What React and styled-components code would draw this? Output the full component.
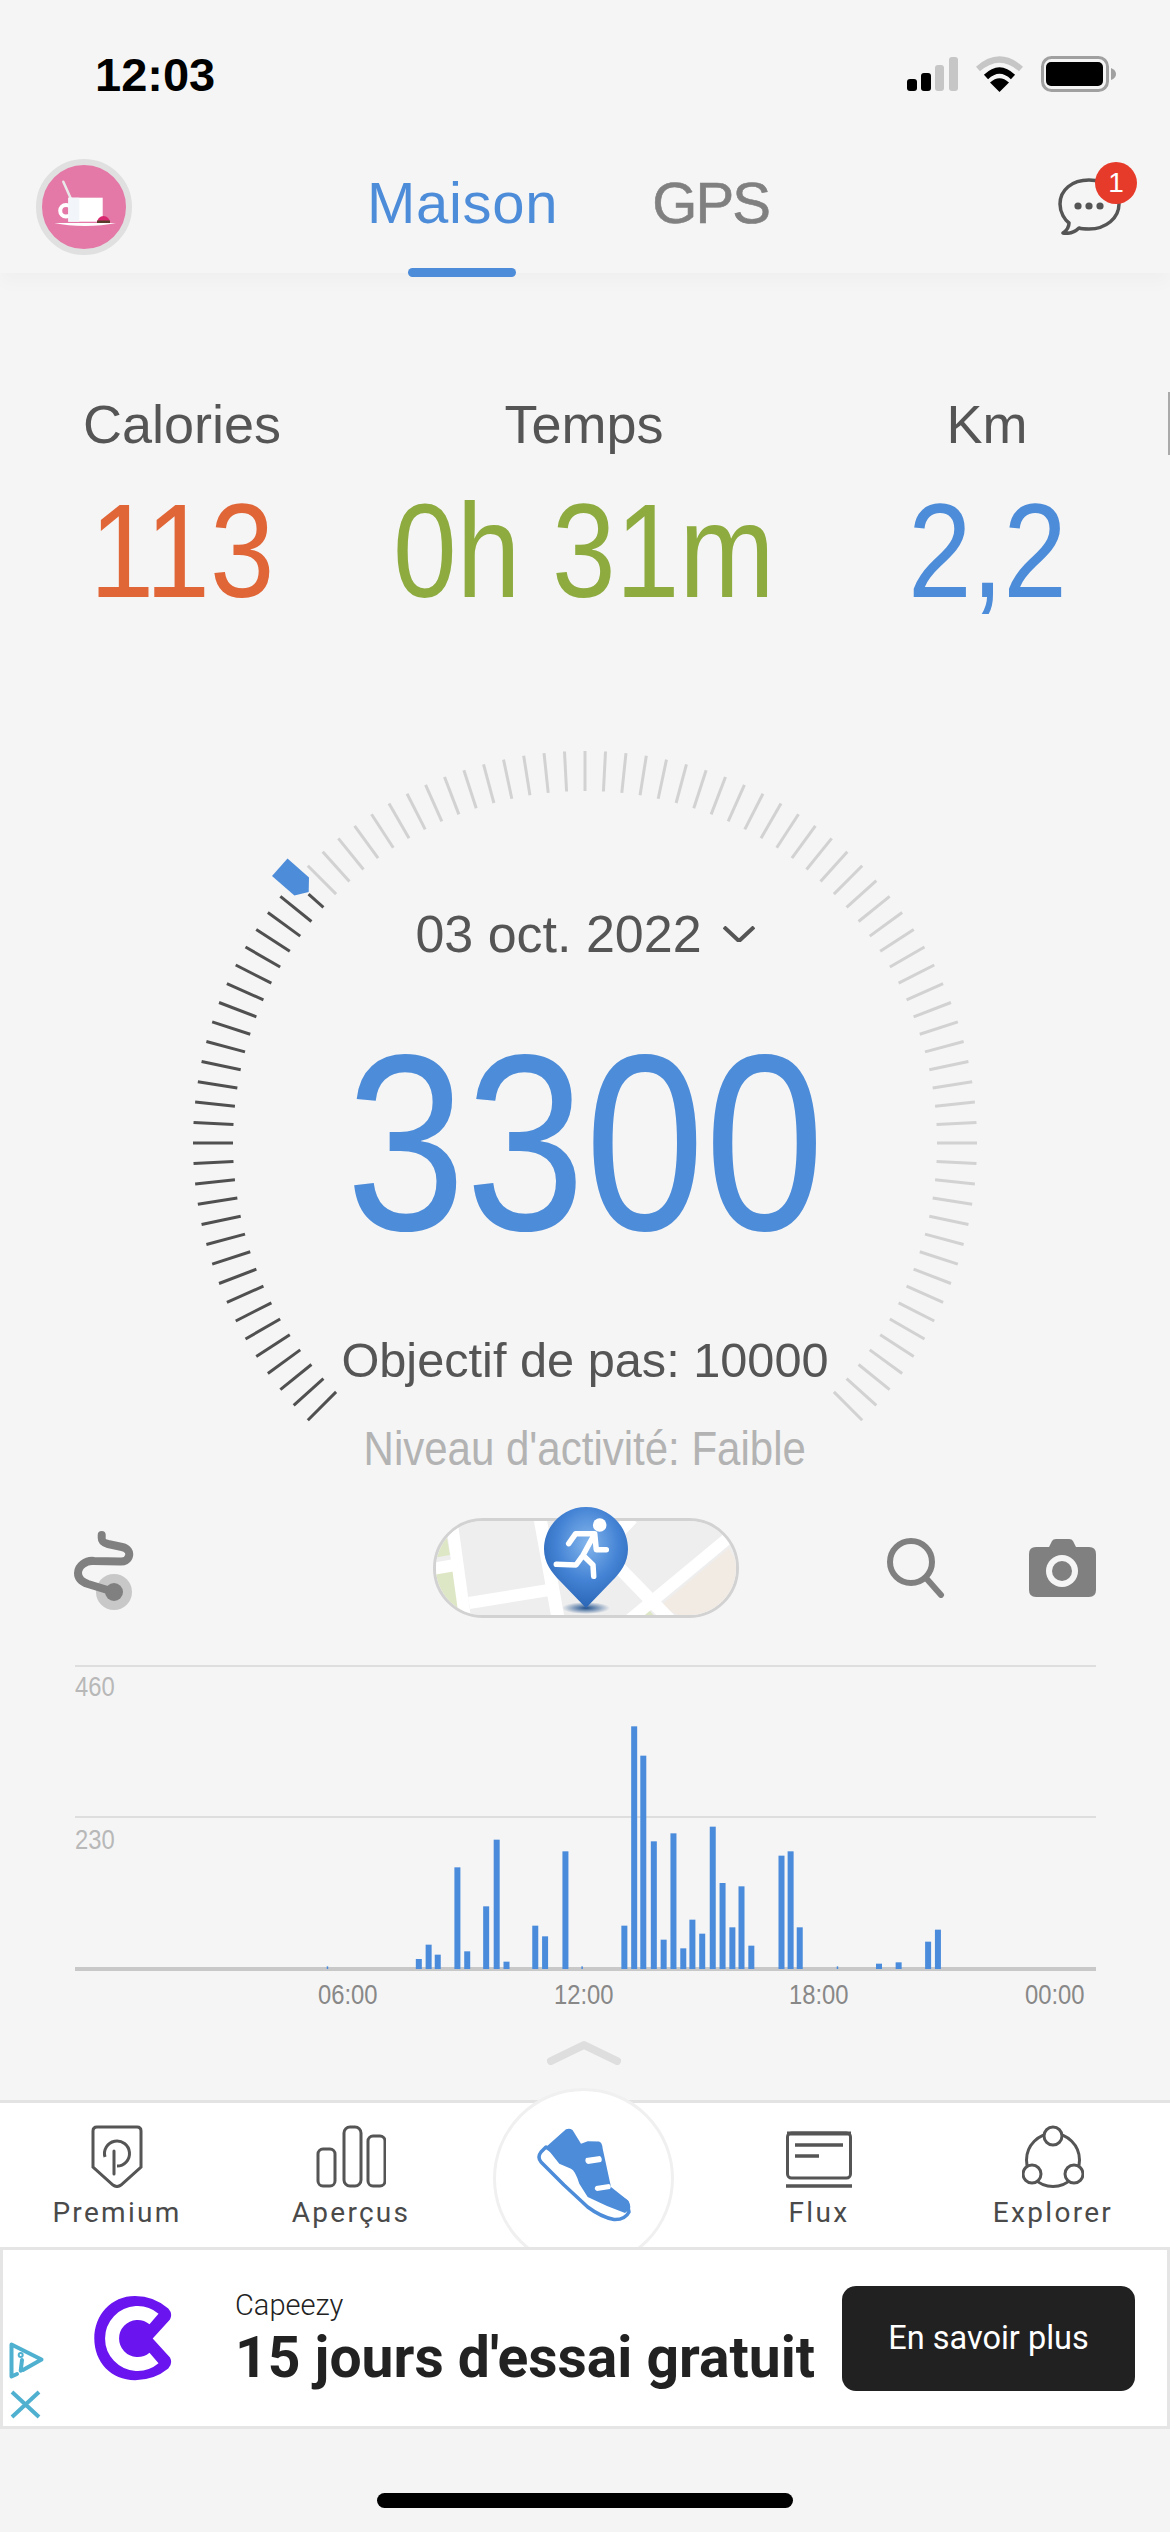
import React from 'react';
import styled, { createGlobalStyle } from 'styled-components';

const GlobalStyle = createGlobalStyle`
  html, body { margin: 0; padding: 0; background: #f5f5f5; }
  body { font-family: "Liberation Sans", Arial, sans-serif; }
`;

const BLUE = '#4d8cd9';

const Page = styled.div`
  width: 1170px;
  height: 2532px;
  background: #f5f5f5;
  display: flex;
  flex-direction: column;
  overflow: hidden;
`;

const StatusBar = styled.div`
  height: 148px;
  margin-bottom: 2px;
  display: flex;
  align-items: center;
  justify-content: space-between;
  padding: 0 54px 0 95px;
  box-sizing: border-box;
`;

const Time = styled.div`
  font-size: 47px;
  font-weight: 700;
  color: #000;
`;

const StatusIcons = styled.div`
  display: flex;
  align-items: center;
  gap: 17px;
`;

const Header = styled.header`
  height: 123px;
  display: flex;
  align-items: flex-start;
  padding: 0 49px 0 36px;
  box-sizing: border-box;
  background: #f5f5f5;
  box-shadow: 0 10px 16px rgba(0, 0, 0, 0.025);
`;

const Avatar = styled.div`
  width: 96px;
  height: 96px;
  margin-top: 9px;
  box-sizing: border-box;
  border: 6px solid #e0e0e0;
  border-radius: 50%;
  background: #e479a8;
  overflow: hidden;
`;

const Tabs = styled.nav`
  display: flex;
  gap: 94px;
  margin-left: 235px;
`;

const Tab = styled.div`
  position: relative;
  height: 123px;
  padding-top: 24px;
  box-sizing: border-box;
  font-size: 58px;
  line-height: 1;
  letter-spacing: ${p => (p.$active ? '0.7px' : '-1.8px')};
  color: ${p => (p.$active ? BLUE : '#808080')};
  -webkit-text-stroke: ${p => (p.$active ? '0' : '0.6px #808080')};
  &::after {
    content: '';
    display: ${p => (p.$active ? 'block' : 'none')};
    position: absolute;
    left: 41px;
    bottom: -4px;
    width: 108px;
    height: 9px;
    border-radius: 5px;
    background: ${BLUE};
  }
`;

const Messages = styled.div`
  position: relative;
  margin-left: auto;
  margin-top: 28px;
  width: 63px;
  height: 57px;
`;

const Badge = styled.span`
  position: absolute;
  left: 37px;
  top: -16px;
  width: 42px;
  height: 42px;
  border-radius: 50%;
  background: #e63a2b;
  color: #fff;
  font-size: 28px;
  line-height: 42px;
  text-align: center;
`;

const Stats = styled.section`
  position: relative;
  margin-top: 124px;
  display: grid;
  grid-template-columns: 364px 432px 1fr;
  column-gap: 4px;
`;

const EdgeMark = styled.i`
  position: absolute;
  right: 0;
  top: -5px;
  width: 2px;
  height: 63px;
  background: #aaa;
`;

const Stat = styled.div`
  display: flex;
  flex-direction: column;
  align-items: center;
  gap: 34px;
`;

const StatLabel = styled.div`
  font-size: 54px;
  line-height: 1;
  color: #555;
`;

const Narrow = styled.div`
  font-size: ${p => p.$size}px;
  line-height: 1;
  color: ${p => p.$color};
  white-space: nowrap;
  transform: scaleX(${p => p.$sx});
`;

const Dial = styled.section`
  position: relative;
  margin-top: 131px;
  height: 724px;
  padding-top: 159px;
  box-sizing: border-box;
  display: flex;
  flex-direction: column;
  align-items: center;
`;

const Ticks = styled.svg`
  position: absolute;
  left: 191px;
  top: 0;
`;

const DateRow = styled.div`
  position: relative;
  display: flex;
  align-items: center;
  gap: 21px;
  font-size: 52px;
  line-height: 1;
  color: #555;
`;

const Steps = styled(Narrow)`
  position: relative;
  margin-top: 59px;
`;

const Goal = styled.div`
  position: relative;
  margin-top: 67px;
  font-size: 48.7px;
  line-height: 1;
  color: #555;
`;

const Level = styled(Narrow)`
  position: relative;
  margin-top: 40px;
`;

const ToolRow = styled.section`
  position: relative;
  margin-top: 45px;
  height: 100px;
  padding: 0 74px 0 70px;
  display: grid;
  grid-template-columns: 363px 306px 1fr;
  align-items: center;
`;

const Tools = styled.div`
  display: flex;
  justify-content: flex-end;
  align-items: center;
  gap: 83px;
`;

const RouteSvg = styled.svg`
  margin-top: 6px;
`;

const MapPill = styled.div`
  position: relative;
  width: 306px;
  height: 100px;
`;

const MapFrame = styled.div`
  width: 100%;
  height: 100%;
  box-sizing: border-box;
  border: 3px solid #d2d2d2;
  border-radius: 50px;
  overflow: hidden;
  background: #eee;
  svg { display: block; }
`;

const Pin = styled.svg`
  position: absolute;
  left: 111px;
  top: -11px;
`;

const Chart = styled.section`
  position: relative;
  margin: 47px 74px 0 75px;
  height: 306px;
  svg { display: block; }
`;

const YLabel = styled.span`
  position: absolute;
  left: 0;
  top: ${p => p.$top}px;
  font-size: 28px;
  line-height: 1;
  color: #b8b8b8;
  transform: scaleX(0.85);
  transform-origin: left center;
`;

const XAxis = styled.div`
  margin-top: 10px;
  padding-right: 86px;
  display: flex;
  justify-content: flex-end;
`;

const XLabel = styled.span`
  width: 235.5px;
  font-size: 28px;
  line-height: 1;
  color: #888;
  text-align: right;
  transform: scaleX(0.85);
  transform-origin: right center;
`;

const Handle = styled.div`
  margin-top: 31px;
  height: 25px;
  display: flex;
  justify-content: center;
  padding-right: 2px;
`;

const BottomNav = styled.nav`
  margin-top: 35px;
  height: 147px;
  box-sizing: border-box;
  border-top: 3px solid #e3e3e3;
  background: #fff;
  padding-top: 22px;
  display: grid;
  grid-template-columns: repeat(5, 234px);
`;

const NavItem = styled.div`
  position: relative;
  display: flex;
  flex-direction: column;
  align-items: center;
`;

const NavIcon = styled.div`
  height: 63px;
  display: flex;
  align-items: flex-end;
`;

const NavLabel = styled.div`
  margin-top: 11px;
  font-family: Roboto, "Liberation Sans", sans-serif;
  font-size: 28px;
  font-weight: 400;
  line-height: 1;
  letter-spacing: 2.3px;
  color: #4a4a4a;
`;

const RunButton = styled.div`
  position: absolute;
  left: 25px;
  top: -37px;
  width: 181px;
  height: 181px;
  box-sizing: border-box;
  border: 3px solid #f0f0f0;
  border-radius: 50%;
  background: #fff;
  display: flex;
  align-items: flex-start;
  justify-content: center;
  padding-top: 37px;
`;

const Ad = styled.aside`
  position: relative;
  z-index: 2;
  height: 182px;
  box-sizing: border-box;
  border: 3px solid #e5e5e5;
  background: #fff;
  display: flex;
  align-items: center;
  padding: 0 32px 0 91px;
`;

const AdChoices = styled.svg`
  position: absolute;
  left: 6px;
  top: 92px;
`;

const AdText = styled.div`
  margin-left: 63px;
  font-family: Roboto, "Liberation Sans", sans-serif;
  color: #222;
`;

const AdBrand = styled.div`
  font-size: 29px;
  font-weight: 300;
  line-height: 1;
`;

const AdTitle = styled.div`
  margin-top: 9px;
  font-size: 57px;
  font-weight: 700;
  line-height: 1;
  white-space: nowrap;
`;

const AdButton = styled.div`
  margin-left: auto;
  width: 293px;
  height: 105px;
  border-radius: 14px;
  background: #212121;
  color: #fff;
  font-family: Roboto, "Liberation Sans", sans-serif;
  font-size: 32.5px;
  display: flex;
  align-items: center;
  justify-content: center;
`;

const HomeBar = styled.div`
  align-self: center;
  margin-top: 64px;
  width: 416px;
  height: 15px;
  border-radius: 8px;
  background: #000;
`;

const Bottom = styled.div`
  flex: 1;
  background: #f4f4f4;
  display: flex;
  flex-direction: column;
`;

// bar positions read off the reference: [left x, height]
const bars = [
  [413, 8], [540, 30], [554, 73], [567, 43], [595, 305], [609, 53], [636, 188], [651, 388], [665, 22],
  [706, 130], [720, 98], [749, 353], [776, 8], [833, 130], [847, 728], [860, 640], [875, 383], [889, 88],
  [903, 407], [917, 62], [930, 148], [944, 106], [959, 427], [973, 258], [987, 125], [1000, 248], [1014, 70],
  [1057, 340], [1070, 353], [1083, 125], [1140, 8], [1196, 16], [1224, 20], [1266, 82], [1280, 118],
].map(([zx, zh]) => ({ x: 40 + zx / 1.4255 - 75, h: zh / 3, tiny: zh < 10 }));

function DialTicks() {
  const ticks = [];
  for (let a = -135; a <= 135; a += 3) {
    const rad = (a * Math.PI) / 180;
    const outer = a === -48 ? 372 : 392;
    ticks.push(
      <line
        key={a}
        x1={394 + 352 * Math.sin(rad)}
        y1={394 - 352 * Math.cos(rad)}
        x2={394 + outer * Math.sin(rad)}
        y2={394 - outer * Math.cos(rad)}
        stroke={a <= -48 ? '#505050' : '#d2d2d2'}
        strokeWidth="3"
      />
    );
  }
  return (
    <Ticks width="788" height="788" viewBox="0 0 788 788">
      {ticks}
      <polygon points="96.5,109.6 118,128.5 117.7,143 103.4,146.5 81,127" fill={BLUE} />
    </Ticks>
  );
}

function CupAvatar() {
  return (
    <svg width="84" height="84" viewBox="0 0 84 84">
      <line x1="21.3" y1="16.7" x2="28.7" y2="33.3" stroke="#e8e8e8" strokeWidth="2.5" strokeLinecap="round" />
      <circle cx="24" cy="45.7" r="5.8" fill="none" stroke="#fff" strokeWidth="4" />
      <rect x="26.3" y="32.7" width="34.4" height="24" fill="#fff" />
      <rect x="26.3" y="32.7" width="11" height="24" fill="#f2f5f9" />
      <path d="M55 58a6.5 7 0 0 1 13 0z" fill="#d8286f" />
      <rect x="55" y="55.5" width="13" height="2.5" fill="#5a3a2a" />
      <path d="M12.3 58H74Q60 61 43 61T12.3 58Z" fill="#fff" />
    </svg>
  );
}

function Signal() {
  return (
    <svg width="51" height="34" viewBox="0 0 51 34">
      <rect x="0" y="22" width="10" height="12" rx="3" fill="#000" />
      <rect x="14" y="16" width="10" height="18" rx="3" fill="#000" />
      <rect x="28" y="8" width="9" height="26" rx="3" fill="#c6c6c6" />
      <rect x="42" y="0" width="9" height="34" rx="3" fill="#c6c6c6" />
    </svg>
  );
}

function Wifi() {
  return (
    <svg width="49" height="36" viewBox="0 0 49 36">
      <path d="M3 13Q24.5 -6 46 13" fill="none" stroke="#c6c6c6" strokeWidth="6" />
      <path d="M11 21Q24.5 8 38 21" fill="none" stroke="#000" strokeWidth="6" />
      <path d="M24.5 36L15 26.5Q24.5 18 34 26.5Z" fill="#000" />
    </svg>
  );
}

function Battery() {
  return (
    <svg width="75" height="36" viewBox="0 0 75 36">
      <rect x="1.5" y="1.5" width="65" height="33" rx="9" fill="none" stroke="#a0a0a0" strokeWidth="3" />
      <rect x="5" y="6" width="57" height="24" rx="5" fill="#000" />
      <path d="M70 12Q75 14 75 18T70 24Z" fill="#a0a0a0" />
    </svg>
  );
}

function Bubble() {
  return (
    <svg width="63" height="57" viewBox="0 0 63 57">
      <path
        d="M31 2C14 2 2 12 2 26C2 35 7 42 11 45C11 49 8 53 5 55C11 56 17 54 21 50C24 51 28 51 31 51C48 51 61 40 61 26C61 12 48 2 31 2Z"
        fill="none"
        stroke="#555"
        strokeWidth="3.5"
        strokeLinejoin="round"
      />
      <circle cx="20" cy="28" r="3.6" fill="#555" />
      <circle cx="31" cy="28" r="3.6" fill="#555" />
      <circle cx="42" cy="28" r="3.6" fill="#555" />
    </svg>
  );
}

function RouteIcon() {
  return (
    <RouteSvg width="64" height="86" viewBox="0 0 64 86">
      <circle cx="44" cy="64" r="18" fill="#c8c8c8" />
      <path
        d="M31.7 7V10C31.7 14 34 15 38 16L52 19C58 20.5 60 24 59 28C58 32 54 34 50 33.5L24 33C16 32 8 38 8 45C8 51 12 54 18 56L44 64"
        fill="none"
        stroke="#808080"
        strokeWidth="8"
        strokeLinecap="round"
      />
      <circle cx="44" cy="64" r="9" fill="#808080" />
    </RouteSvg>
  );
}

function MapArt() {
  return (
    <svg width="300" height="94" viewBox="3 3 300 94">
      <rect width="306" height="100" fill="#eee" />
      <path d="M5 22L14 20L17 37L0 40Z" fill="#dde6c5" />
      <path d="M0 56L21 52L30 100H8Z" fill="#dde6c5" />
      <path d="M227 88L296 30L306 48V100H251Z" fill="#f2ebe4" />
      <path d="M206 100L215 91L223 100Z" fill="#dde6c5" />
      <g stroke="#fff" fill="none">
        <path d="M19 6L32 100" strokeWidth="12" />
        <path d="M0 51L22 47" strokeWidth="12" />
        <path d="M36 85L116 72" strokeWidth="12" />
        <path d="M107 0L125 100" strokeWidth="13" />
        <path d="M199 0L180 20" strokeWidth="13" />
        <path d="M170 33L238 103" strokeWidth="13" />
        <path d="M300 16L182 114" strokeWidth="12" />
      </g>
    </svg>
  );
}

function PinIcon() {
  return (
    <Pin width="84" height="108" viewBox="0 0 84 108">
      <defs>
        <radialGradient id="pinFill" cx="52%" cy="36%" r="62%">
          <stop offset="0%" stopColor="#84b6ec" />
          <stop offset="60%" stopColor="#4382d4" />
          <stop offset="100%" stopColor="#2d68b8" />
        </radialGradient>
        <radialGradient id="pinShade">
          <stop offset="0%" stopColor="#1e4f8c" />
          <stop offset="100%" stopColor="#1e4f8c" stopOpacity="0" />
        </radialGradient>
      </defs>
      <ellipse cx="42" cy="101" rx="24" ry="6" fill="url(#pinShade)" />
      <path
        d="M42 0C65 0 84 19 84 42C84 56 76 66 68 74L42 101L16 74C8 66 0 56 0 42C0 19 19 0 42 0Z"
        fill="url(#pinFill)"
      />
      <circle cx="55.7" cy="18" r="6.8" fill="#fff" />
      <path
        d="M24.7 36.7L31.7 26.7H50.7L39 48.3L32 58L12.3 57.3M39 48.3L49 58L49.7 69.3M50.7 26.7L52.3 42.7H62.3"
        fill="none"
        stroke="#fff"
        strokeWidth="5.5"
        strokeLinecap="round"
        strokeLinejoin="round"
      />
    </Pin>
  );
}

function SearchIcon() {
  return (
    <svg width="60" height="60" viewBox="0 0 60 60">
      <circle cx="25" cy="24" r="21" fill="none" stroke="#808080" strokeWidth="6" />
      <path d="M40 40L55 57" stroke="#808080" strokeWidth="6" strokeLinecap="round" />
    </svg>
  );
}

function CameraIcon() {
  return (
    <svg width="67" height="58" viewBox="0 0 67 58">
      <path
        d="M20 8L23 2Q24 0 27 0H40Q43 0 44 2L47 8H60Q67 8 67 15V51Q67 58 60 58H7Q0 58 0 51V15Q0 8 7 8Z"
        fill="#808080"
      />
      <circle cx="33" cy="32" r="16" fill="#f5f5f5" />
      <circle cx="33" cy="32" r="10" fill="#808080" />
    </svg>
  );
}

function PremiumIcon() {
  return (
    <svg width="52" height="63" viewBox="0 0 52 63" fill="none" stroke="#555" strokeWidth="3">
      <path d="M6 2H46Q50 2 50 6V42L30 60Q26 63 22 60L2 42V6Q2 2 6 2Z" />
      <path d="M14 32A12.5 12.5 0 1 1 26 41" />
      <path d="M23 26V49" strokeLinecap="round" />
    </svg>
  );
}

function InsightsIcon() {
  return (
    <svg width="70" height="63" viewBox="0 0 70 63" fill="none" stroke="#555" strokeWidth="3">
      <rect x="2" y="24" width="17" height="37" rx="5" />
      <rect x="28" y="2" width="17" height="59" rx="6" />
      <rect x="52" y="11" width="17" height="50" rx="5" />
    </svg>
  );
}

function FeedIcon() {
  return (
    <svg width="66" height="57" viewBox="0 0 66 57" fill="none" stroke="#555" strokeWidth="3">
      <rect x="1.5" y="2" width="63" height="45" rx="4" />
      <path d="M1 2.5H65" strokeWidth="4" />
      <path d="M9 14H57M9 25H33" strokeWidth="3.5" />
      <path d="M0 55H66" strokeWidth="3.5" />
    </svg>
  );
}

function ExploreIcon() {
  return (
    <svg width="62" height="63" viewBox="0 0 62 63" stroke="#555" strokeWidth="3">
      <circle cx="31" cy="35" r="26.5" fill="none" />
      <circle cx="31" cy="11" r="9" fill="#fff" />
      <circle cx="10" cy="49" r="9" fill="#fff" />
      <circle cx="52" cy="49" r="9" fill="#fff" />
    </svg>
  );
}

function ShoeIcon() {
  return (
    <svg width="94" height="94" viewBox="0 0 94 94">
      <path
        d="M9 19L4 24Q0 29 4 34L27 57L50.7 79Q64 89 77 91.5Q88 92 92 84L90 74Z"
        fill="#fff"
        stroke={BLUE}
        strokeWidth="3.5"
        strokeLinejoin="round"
      />
      <path
        d="M9 19L29 1.3Q33 0 35.7 2.3L44 15.7L50.7 13.3L62 13.5Q65 14 65.7 20.7L74 59L90.7 72.3Q94 76 93 81L88 85L70 78L50.7 69L42.3 55.7Q38 42 34 40.7L22.3 35.7Z"
        fill={BLUE}
      />
      <path d="M49 30L63 28Q66 31 64 34L51 36Q47 34 49 30Z" fill="#fff" />
      <path d="M59 58L72 56Q75 58 73 61L60 63Q56 61 59 58Z" fill="#fff" />
    </svg>
  );
}

function CapeezyLogo() {
  return (
    <svg width="78" height="85" viewBox="0 0 78 85">
      <path
        d="M58.7 42.6L76 23.6Q79 17.6 74.3 12.6Q60 0 41 0C17 0 0.3 19 0.3 42.6C0.3 66 17 84.3 41 84.3Q60 84.3 74.3 72.6Q79 67.6 76 61.6Z"
        fill="#6a14f0"
      />
      <path d="M60 23A25.5 25.5 0 1 0 60 62" fill="none" stroke="#fff" strokeWidth="14" />
    </svg>
  );
}

export default function App() {
  return (
    <Page>
      <GlobalStyle />
      <StatusBar>
        <Time>12:03</Time>
        <StatusIcons>
          <Signal />
          <Wifi />
          <Battery />
        </StatusIcons>
      </StatusBar>

      <Header>
        <Avatar>
          <CupAvatar />
        </Avatar>
        <Tabs>
          <Tab $active>Maison</Tab>
          <Tab>GPS</Tab>
        </Tabs>
        <Messages>
          <Bubble />
          <Badge>1</Badge>
        </Messages>
      </Header>

      <Stats>
        <Stat>
          <StatLabel>Calories</StatLabel>
          <Narrow $size={133} $sx={0.87} $color="#e06537">113</Narrow>
        </Stat>
        <Stat>
          <StatLabel>Temps</StatLabel>
          <Narrow $size={133} $sx={0.86} $color="#8dab3f">0h 31m</Narrow>
        </Stat>
        <Stat>
          <StatLabel>Km</StatLabel>
          <Narrow $size={133} $sx={0.86} $color={BLUE}>2,2</Narrow>
        </Stat>
        <EdgeMark />
      </Stats>

      <Dial>
        <DialTicks />
        <DateRow>
          03 oct. 2022
          <svg width="32" height="16" viewBox="0 0 32 16">
            <path d="M1 1L16 15L31 1" fill="none" stroke="#555" strokeWidth="4" />
          </svg>
        </DateRow>
        <Steps $size={250} $sx={0.86} $color={BLUE}>3300</Steps>
        <Goal>Objectif de pas: 10000</Goal>
        <Level $size={48} $sx={0.875} $color="#b3b3b3">Niveau d'activité: Faible</Level>
      </Dial>

      <ToolRow>
        <RouteIcon />
        <MapPill>
          <MapFrame>
            <MapArt />
          </MapFrame>
          <PinIcon />
        </MapPill>
        <Tools>
          <SearchIcon />
          <CameraIcon />
        </Tools>
      </ToolRow>

      <Chart>
        <svg width="1021" height="306" viewBox="0 0 1021 306">
          <line x1="0" y1="1" x2="1021" y2="1" stroke="#dedede" strokeWidth="2" />
          <line x1="0" y1="152" x2="1021" y2="152" stroke="#dedede" strokeWidth="2" />
          <line x1="0" y1="304" x2="1021" y2="304" stroke="#c8c8c8" strokeWidth="4" />
          {bars.map(b => (
            <rect
              key={b.x}
              x={b.x - 3}
              y={304 - b.h}
              width={b.tiny ? 1.5 : 6}
              height={b.h}
              fill="#4a8bdb"
            />
          ))}
        </svg>
        <YLabel $top={8}>460</YLabel>
        <YLabel $top={161}>230</YLabel>
      </Chart>
      <XAxis>
        <XLabel>06:00</XLabel>
        <XLabel>12:00</XLabel>
        <XLabel>18:00</XLabel>
        <XLabel>00:00</XLabel>
      </XAxis>

      <Handle>
        <svg width="74" height="25" viewBox="0 0 74 25">
          <path d="M4 21L37 5L70 21" fill="none" stroke="#dedede" strokeWidth="8" strokeLinecap="round" strokeLinejoin="round" />
        </svg>
      </Handle>

      <BottomNav>
        <NavItem>
          <NavIcon><PremiumIcon /></NavIcon>
          <NavLabel>Premium</NavLabel>
        </NavItem>
        <NavItem>
          <NavIcon><InsightsIcon /></NavIcon>
          <NavLabel>Aperçus</NavLabel>
        </NavItem>
        <NavItem>
          <RunButton>
            <ShoeIcon />
          </RunButton>
        </NavItem>
        <NavItem>
          <NavIcon><FeedIcon /></NavIcon>
          <NavLabel>Flux</NavLabel>
        </NavItem>
        <NavItem>
          <NavIcon><ExploreIcon /></NavIcon>
          <NavLabel>Explorer</NavLabel>
        </NavItem>
      </BottomNav>

      <Ad>
        <AdChoices width="36" height="80" viewBox="0 0 36 80" fill="none" stroke="#4fb0d0" strokeWidth="4" strokeLinecap="round" strokeLinejoin="round">
          <path d="M8 32L2.5 34.5V2.5L32.5 17.5L14 28" />
          <path d="M13 18L11.7 28.7" />
          <circle cx="11.7" cy="13" r="1" />
          <path d="M3 50L30 75M30 50L3 75" strokeLinecap="butt" />
        </AdChoices>
        <CapeezyLogo />
        <AdText>
          <AdBrand>Capeezy</AdBrand>
          <AdTitle>15 jours d'essai gratuit</AdTitle>
        </AdText>
        <AdButton>En savoir plus</AdButton>
      </Ad>

      <Bottom>
        <HomeBar />
      </Bottom>
    </Page>
  );
}
